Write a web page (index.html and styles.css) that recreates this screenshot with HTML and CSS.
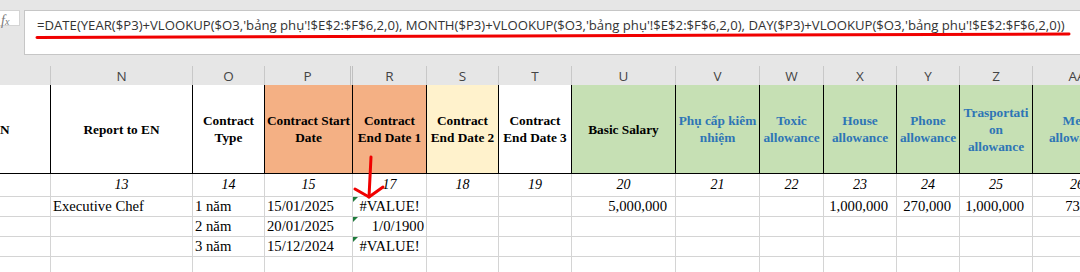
FILE: index.html
```html
<!DOCTYPE html>
<html lang="vi">
<head>
    <meta charset="UTF-8">
    <title>Contract sheet</title>
    <link rel="stylesheet" href="styles.css">
</head>
<body>
    <div class="formula-bar">
        <div class="fx-box"><span class="fx">f<small>x</small></span></div>
        <div class="formula-input">=DATE(YEAR($P3)+VLOOKUP($O3,'bảng phụ'!$E$2:$F$6,2,0), MONTH($P3)+VLOOKUP($O3,'bảng phụ'!$E$2:$F$6,2,0), DAY($P3)+VLOOKUP($O3,'bảng phụ'!$E$2:$F$6,2,0))</div>
    </div>

    <div class="sheet">
        <div class="row col-letters">
            <div class="cell"></div>
            <div class="cell">N</div>
            <div class="cell">O</div>
            <div class="cell hidden-after">P</div>
            <div class="cell">R</div>
            <div class="cell">S</div>
            <div class="cell">T</div>
            <div class="cell">U</div>
            <div class="cell">V</div>
            <div class="cell">W</div>
            <div class="cell">X</div>
            <div class="cell">Y</div>
            <div class="cell">Z</div>
            <div class="cell">AA</div>
        </div>

        <div class="row head">
            <div class="cell cut">N</div>
            <div class="cell">Report to EN</div>
            <div class="cell">Contract<br>Type</div>
            <div class="cell orange">Contract Start<br>Date</div>
            <div class="cell orange">Contract<br>End Date 1</div>
            <div class="cell yellow">Contract<br>End Date 2</div>
            <div class="cell">Contract<br>End Date 3</div>
            <div class="cell green">Basic Salary</div>
            <div class="cell green blue">Phụ cấp kiêm<br>nhiệm</div>
            <div class="cell green blue">Toxic<br>allowance</div>
            <div class="cell green blue">House<br>allowance</div>
            <div class="cell green blue">Phone<br>allowance</div>
            <div class="cell green blue">Trasportati<br>on<br>allowance</div>
            <div class="cell green blue">Meal<br>allowance</div>
        </div>

        <div class="row index">
            <div class="cell"></div>
            <div class="cell">13</div>
            <div class="cell">14</div>
            <div class="cell">15</div>
            <div class="cell">17</div>
            <div class="cell">18</div>
            <div class="cell">19</div>
            <div class="cell">20</div>
            <div class="cell">21</div>
            <div class="cell">22</div>
            <div class="cell">23</div>
            <div class="cell">24</div>
            <div class="cell">25</div>
            <div class="cell">26</div>
        </div>

        <div class="row data">
            <div class="cell"></div>
            <div class="cell">Executive Chef</div>
            <div class="cell">1 năm</div>
            <div class="cell">15/01/2025</div>
            <div class="cell err center">#VALUE!</div>
            <div class="cell"></div>
            <div class="cell"></div>
            <div class="cell money">5,000,000</div>
            <div class="cell"></div>
            <div class="cell"></div>
            <div class="cell money">1,000,000</div>
            <div class="cell money">270,000</div>
            <div class="cell money">1,000,000</div>
            <div class="cell money">730,000</div>
        </div>

        <div class="row data">
            <div class="cell"></div>
            <div class="cell"></div>
            <div class="cell">2 năm</div>
            <div class="cell">20/01/2025</div>
            <div class="cell err right">1/0/1900</div>
            <div class="cell"></div>
            <div class="cell"></div>
            <div class="cell"></div>
            <div class="cell"></div>
            <div class="cell"></div>
            <div class="cell"></div>
            <div class="cell"></div>
            <div class="cell"></div>
            <div class="cell"></div>
        </div>

        <div class="row data">
            <div class="cell"></div>
            <div class="cell"></div>
            <div class="cell">3 năm</div>
            <div class="cell">15/12/2024</div>
            <div class="cell err center">#VALUE!</div>
            <div class="cell"></div>
            <div class="cell"></div>
            <div class="cell"></div>
            <div class="cell"></div>
            <div class="cell"></div>
            <div class="cell"></div>
            <div class="cell"></div>
            <div class="cell"></div>
            <div class="cell"></div>
        </div>

        <div class="row data">
            <div class="cell"></div>
            <div class="cell"></div>
            <div class="cell"></div>
            <div class="cell"></div>
            <div class="cell"></div>
            <div class="cell"></div>
            <div class="cell"></div>
            <div class="cell"></div>
            <div class="cell"></div>
            <div class="cell"></div>
            <div class="cell"></div>
            <div class="cell"></div>
            <div class="cell"></div>
            <div class="cell"></div>
        </div>
    </div>

    <!-- hand-drawn red marks on top of the screenshot -->
    <svg class="marks" width="1080" height="272" viewBox="0 0 1080 272">
        <path d="M37 37.5 Q 550 36.5 1069 34" />
        <path d="M371 157 L369 197" />
        <path d="M355 189 L369 197 L383 187" />
    </svg>
</body>
</html>
```

FILE: styles.css
```css
* {
    box-sizing: border-box;
}

body {
    margin: 0;
    width: 1080px;
    height: 272px;
    overflow: hidden;
    position: relative;
    background: #fff;
    font-family: "Liberation Serif", "Times New Roman", serif;
}

.formula-bar {
    display: flex;
    gap: 4px;
    height: 66px;
    padding-top: 10px;
    background: #e6e6e6;
}

.fx-box {
    width: 20px;
    height: 16px;
    background: #fff;
    border: 1px solid #d4d4d4;
    border-left: none;
}

.fx {
    display: block;
    padding-left: 1px;
    font-family: "Liberation Serif", serif;
    font-style: italic;
    font-size: 14px;
    line-height: 20px;
    color: #7a7a7a;
}

.fx small {
    font-size: 10px;
}

.formula-input {
    flex: 1;
    height: 45px;
    background: #fff;
    border: 1px solid #c6c6c6;
    border-right: none;
    padding: 5px 0 0 12px;
    font-family: "Open Sans", "Noto Sans", sans-serif;
    font-size: 13.15px;
    line-height: 18px;
    color: #333;
    white-space: nowrap;
}

.sheet {
    width: 1122px;
}

.row {
    display: grid;
    grid-template-columns: 51px 142px 72px 88px 74px 72px 73px 104px 84px 64px 73px 63px 73px 89px;
}

.cell {
    display: flex;
    align-items: center;
    overflow: hidden;
    white-space: nowrap;
}

/* column letters */
.col-letters {
    height: 19px;
    background: #e6e6e6;
}

.col-letters .cell {
    justify-content: center;
    border-right: 1px solid #c8c8c8;
    font-family: "Open Sans", "Noto Sans", sans-serif;
    font-size: 13.5px;
    color: #444;
}

.col-letters .hidden-after {
    border-right: 3px double #c0c0c0;
}

/* header row */
.head {
    height: 89px;
    border-bottom: 1px solid #000;
}

.head .cell {
    justify-content: center;
    text-align: center;
    border-right: 1px solid #000;
    font-weight: bold;
    font-size: 13.3px;
    line-height: 17px;
    color: #000;
}

.head .cut {
    justify-content: flex-start;
}

.orange {
    background: #f4b084;
}

.yellow {
    background: #fff2cc;
}

.green {
    background: #c6e0b4;
}

.head .blue {
    color: #2e75b6;
}

/* body rows */
.data {
    height: 20px;
}

.index {
    height: 23px;
}

.index .cell,
.data .cell {
    border-right: 1px solid #d4d4d4;
    border-bottom: 1px solid #d4d4d4;
    padding: 0 2px;
    font-size: 14.7px;
    color: #000;
}

.index .cell {
    justify-content: center;
    font-style: italic;
    font-size: 14px;
}

.data .center {
    justify-content: center;
    padding: 0;
}

.data .right {
    justify-content: flex-end;
}

.data .money {
    justify-content: flex-end;
    padding-right: 8px;
}

.err {
    position: relative;
}

.err::before {
    content: "";
    position: absolute;
    left: 0;
    top: 0;
    border-top: 5px solid #1e7b3c;
    border-right: 5px solid transparent;
}

.marks {
    position: absolute;
    left: 0;
    top: 0;
    pointer-events: none;
}

.marks path {
    fill: none;
    stroke: #f00000;
    stroke-width: 3;
    stroke-linecap: round;
    stroke-linejoin: round;
}
```
